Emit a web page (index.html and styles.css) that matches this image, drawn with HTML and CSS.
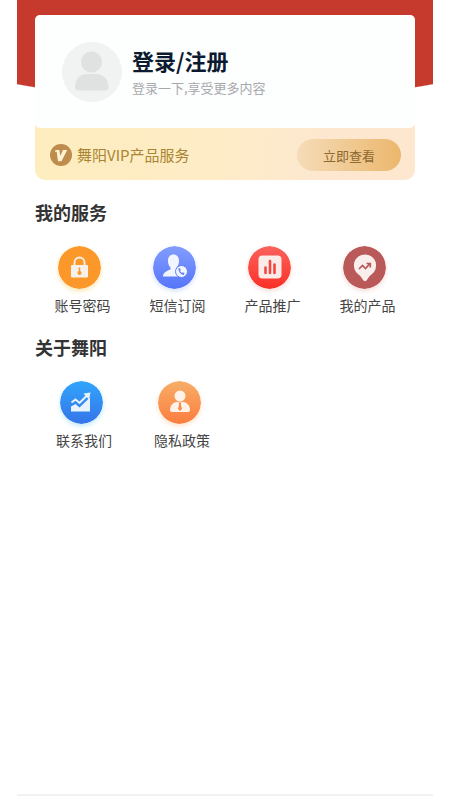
FILE: index.html
```html
<!DOCTYPE html>
<html lang="zh-CN">
<head>
<meta charset="utf-8">
<meta name="viewport" content="width=device-width, initial-scale=1">
<title>我的</title>
<link rel="stylesheet" href="styles.css">
</head>
<body>
<div class="app">
  <header class="hero">
    <div class="panel">
      <a class="profile" href="#">
        <svg class="avatar" viewBox="0 0 60 60" aria-hidden="true">
          <circle cx="30" cy="30" r="30" fill="#f1f2f2"/>
          <circle cx="29.500" cy="20" r="10.500" fill="#e0e1e1"/>
          <path d="M13 45C13 36 19 32 25 32H34C41 32 46.500 37 46.500 45Q46.500 48.500 43 48.500H16.500Q13 48.500 13 45Z" fill="#e0e1e1"/>
        </svg>
        <span class="profile-text">
          <strong class="profile-title">登录/注册</strong>
          <span class="profile-note">登录一下,享受更多内容</span>
        </span>
      </a>
      <div class="vip">
        <svg class="vip-badge" viewBox="0 0 22 22" aria-hidden="true">
          <circle cx="11" cy="11" r="11" fill="#be8c4d"/>
          <path d="M5.400 6H9.400L10.200 12L13 6H17.200L11.500 17.300H8L6.700 7.800H5Z" fill="#fff3d4"/>
        </svg>
        <span class="vip-name">舞阳VIP产品服务</span>
        <button class="vip-button" type="button">立即查看</button>
      </div>
    </div>
  </header>

  <main class="content">
    <section>
      <h2>我的服务</h2>
      <nav class="services">
        <a class="service" href="#">
          <svg class="icon glow-amber" viewBox="0 0 43 43" aria-hidden="true">
            <circle cx="21.500" cy="21.500" r="21.500" fill="#fc982a"/>
            <path d="M16.500 20V16.500A5 5 0 0 1 26.500 16.500V20" fill="none" stroke="#f7f1ec" stroke-width="1.800"/>
            <rect x="13" y="19" width="17" height="12.500" rx="1.200" fill="#f7f1ec"/>
            <path d="M21.500 21.500V26" stroke="#fc982a" stroke-width="1.500"/>
            <circle cx="21.500" cy="27" r="2" fill="#fc982a"/>
          </svg>
          <span>账号密码</span>
        </a>
        <a class="service" href="#">
          <svg class="icon glow-blue" viewBox="0 0 43 43" aria-hidden="true">
            <defs><linearGradient id="indigo" x2="0" y2="1"><stop stop-color="#839dfd"/><stop offset="1" stop-color="#5575fc"/></linearGradient></defs>
            <circle cx="21.500" cy="21.500" r="21.500" fill="url(#indigo)"/>
            <path d="M20.500 8.500C16.500 8.500 15 11.500 15 15C15 18 16 20 17.500 21.500V23.500C13 25 10 27 10 30.500H27.500V24.500L23.500 23V21.500C25 20 26 18 26 15C26 11.500 24.500 8.500 20.500 8.500Z" fill="#f3f5fe"/>
            <circle cx="28.500" cy="25.500" r="6" fill="#f3f5fe" stroke="#617efc"/>
            <path d="M26.300 22.500C25.500 25 28 28.300 31 28" fill="none" stroke="#617efc" stroke-width="1.300"/>
            <path d="M26.200 22.500L27 24.500M29.300 27L31.200 28" stroke="#617efc" stroke-width="1.800"/>
          </svg>
          <span>短信订阅</span>
        </a>
        <a class="service" href="#">
          <svg class="icon glow-red" viewBox="0 0 43 43" aria-hidden="true">
            <defs><linearGradient id="red" x2="0" y2="1"><stop stop-color="#fb625c"/><stop offset="1" stop-color="#fb3027"/></linearGradient></defs>
            <circle cx="21.500" cy="21.500" r="21.500" fill="url(#red)"/>
            <rect x="10.500" y="9.500" width="23" height="23" rx="4" fill="#fbebe9"/>
            <path d="M17.500 21.500V27M22 15V27M26.500 18.500V27" stroke="#f34840" stroke-width="2.600" stroke-linecap="round"/>
          </svg>
          <span>产品推广</span>
        </a>
        <a class="service" href="#">
          <svg class="icon glow-wine" viewBox="0 0 43 43" aria-hidden="true">
            <circle cx="21.500" cy="21.500" r="21.500" fill="#b95959"/>
            <path d="M22 8.500A11 11 0 0 1 28.500 28.500C26 30 25.500 32 23.500 34.500Q22 36 20.500 34.500C18.500 32 18 30 15.500 28.500A11 11 0 0 1 22 8.500Z" fill="#f9eeeb"/>
            <path d="M16 23L19.500 19.500L22.500 22.500L27 17.500M23.500 17.500H27.300V21.500" fill="none" stroke="#b95959" stroke-width="1.700"/>
          </svg>
          <span>我的产品</span>
        </a>
      </nav>
    </section>

    <section>
      <h2>关于舞阳</h2>
      <nav class="services about">
        <a class="service" href="#">
          <svg class="icon glow-sky" viewBox="0 0 43 43" aria-hidden="true">
            <defs><linearGradient id="blue" x2="0" y2="1"><stop stop-color="#31a5fc"/><stop offset="1" stop-color="#3474e8"/></linearGradient></defs>
            <circle cx="21.500" cy="21.500" r="21.500" fill="url(#blue)"/>
            <path d="M11 25.500L15.500 23L19.500 26.500L30 16.500V30.500H11Z" fill="#e8f3fe"/>
            <path d="M11.500 21.500L15.500 18.500L19.500 22L27.500 14" fill="none" stroke="#e8f3fe" stroke-width="2"/>
            <path d="M23.500 12.500L30.500 11.500L29 18.500Z" fill="#e8f3fe"/>
          </svg>
          <span>联系我们</span>
        </a>
        <a class="service" href="#">
          <svg class="icon glow-orange" viewBox="0 0 43 43" aria-hidden="true">
            <defs><linearGradient id="orange" x2="0" y2="1"><stop stop-color="#f6ae68"/><stop offset="1" stop-color="#fc7d3d"/></linearGradient></defs>
            <circle cx="21.500" cy="21.500" r="21.500" fill="url(#orange)"/>
            <circle cx="22" cy="15" r="5.500" fill="#fff3e9"/>
            <path d="M12 29C12 24 15.500 21 19 21H25C28.500 21 32 24 32 29Q32 31 30 31H14Q12 31 12 29Z" fill="#fff3e9"/>
            <path d="M20.500 21.500H23.500L22.800 23.500L24 28L22 30L20 28L21.200 23.500Z" fill="#f78a49"/>
          </svg>
          <span>隐私政策</span>
        </a>
      </nav>
    </section>
  </main>
  <footer class="bottom-bar"></footer>
</div>
</body>
</html>
```
FILE: styles.css
```css
* {
  box-sizing: border-box;
}

body {
  margin: 0;
  background: #fff;
  color: #444;
  font-family: "Noto Sans CJK SC", sans-serif;
}

a {
  color: inherit;
  text-decoration: none;
}

.app {
  display: flex;
  flex-direction: column;
  min-height: 100vh;
  margin: 0 17px;
}

.hero {
  padding: 15px 18px 0;
  background: radial-gradient(ellipse 90% 102px at 50% 0, #c63a2e 99%, transparent 100%) no-repeat;
}

.panel {
  overflow: hidden;
  border-radius: 5px 5px 10px 10px;
  background: linear-gradient(100deg, #feedbd, #fdecc6 50%, #fde8cf 75%);
}

.profile {
  display: flex;
  align-items: center;
  gap: 10px;
  height: 113px;
  padding: 0 27px;
  border-radius: 5px;
  background: #fdfefe;
}

.avatar {
  flex: none;
  width: 60px;
  height: 60px;
}

.profile-text {
  display: flex;
  flex-direction: column;
  gap: 4px;
}

.profile-title {
  color: #0c1a30;
  font-size: 22px;
  line-height: 28px;
}

.profile-note {
  color: #a8a9ad;
  font-size: 13px;
  line-height: 20px;
}

.vip {
  display: flex;
  align-items: center;
  height: 52px;
  padding: 2px 14px 0 15px;
  gap: 5px;
}

.vip-badge {
  flex: none;
  width: 22px;
  height: 22px;
}

.vip-name {
  color: #a98432;
  font-size: 15px;
  line-height: 22px;
}

.vip-button {
  width: 104px;
  height: 32px;
  margin-left: auto;
  padding: 0;
  border: 0;
  border-radius: 16px;
  background: linear-gradient(90deg, #f5dcb8, #ecb76d);
  color: #8d682f;
  font: inherit;
  font-size: 13px;
}

.content {
  flex: 1;
  padding: 0 18px;
}

h2 {
  margin: 19px 0 21px;
  color: #333;
  font-size: 18px;
  font-weight: 700;
  line-height: 26px;
}

.services {
  display: grid;
  grid-template-columns: repeat(4, 1fr);
}

.about {
  grid-template-columns: repeat(2, 98px);
}

.service {
  display: flex;
  flex-direction: column;
  align-items: center;
  gap: 6px;
  font-size: 14px;
  line-height: 20px;
}

.icon {
  width: 43px;
  height: 43px;
  margin-right: 6px;
  border-radius: 50%;
}

.glow-amber {
  box-shadow: 0 2px 5px #fce6b0;
}

.glow-blue {
  box-shadow: 0 2px 5px #d5e0fc;
}

.glow-red,
.glow-wine {
  box-shadow: 0 2px 5px #f5dcda;
}

.glow-sky {
  box-shadow: 0 2px 5px #bfe9f8;
}

.glow-orange {
  box-shadow: 0 2px 5px #fbe2c8;
}

.bottom-bar {
  height: 6px;
  border-top: 2px solid #f2f2f2;
}
```
